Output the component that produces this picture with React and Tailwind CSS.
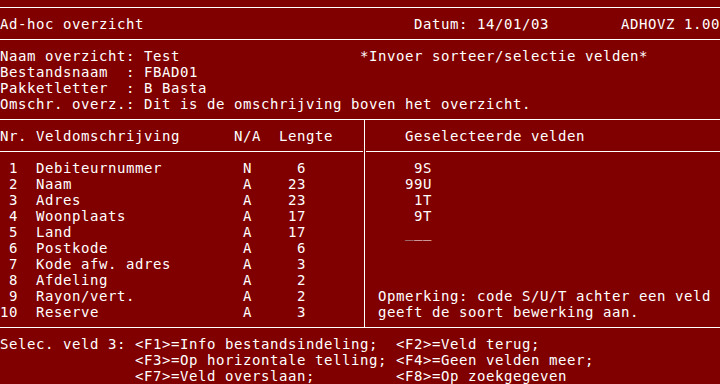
const fields = [
  ['1', 'Debiteurnummer', 'N', '6'],
  ['2', 'Naam', 'A', '23'],
  ['3', 'Adres', 'A', '23'],
  ['4', 'Woonplaats', 'A', '17'],
  ['5', 'Land', 'A', '17'],
  ['6', 'Postkode', 'A', '6'],
  ['7', 'Kode afw. adres', 'A', '3'],
  ['8', 'Afdeling', 'A', '2'],
  ['9', 'Rayon/vert.', 'A', '2'],
  ['10', 'Reserve', 'A', '3'],
]

const selected = ['9S', '99U', '1T', '9T']

const Line = ({ children }) => <div className="h-4 whitespace-pre">{children}</div>

export default function App() {
  return (
    <div className="w-[720px] h-[384px] overflow-hidden bg-[#800000] text-white font-['DejaVu_Sans_Mono',monospace] text-[14px] leading-4 tracking-[0.57px]">
      {/* title bar */}
      <div className="pt-[7px]">
        <div className="border-y border-white pt-2 pb-[7px]">
          <Line>{'Ad-hoc overzicht'.padEnd(46) + 'Datum: 14/01/03' + ' '.repeat(8) + 'ADHOVZ 1.00'}</Line>
        </div>
      </div>

      {/* info */}
      <div className="mt-2">
        <Line>{'Naam overzicht: Test'.padEnd(40) + '*Invoer sorteer/selectie velden*'}</Line>
        <Line>Bestandsnaam  : FBAD01</Line>
        <Line>Pakketletter  : B Basta</Line>
        <Line>Omschr. overz.: Dit is de omschrijving boven het overzicht.</Line>
      </div>

      {/* table */}
      <div className="mt-[7px] border-y border-white flex">
        <div className="w-[364px] pt-2 pb-[7px]">
          <Line>{'Nr. Veldomschrijving' + ' '.repeat(6) + 'N/A  Lengte'}</Line>
          <div className="h-4 pt-[7px] pr-px">
            <div className="h-px bg-white" />
          </div>
          {fields.map(([nr, name, na, len]) => (
            <Line key={nr}>{nr.padStart(2) + '  ' + name.padEnd(23) + na + len.padStart(6)}</Line>
          ))}
        </div>
        <div className="flex-1 border-l border-white pt-2 pb-[7px]">
          <div className="pl-[4px]">
            <Line>{'    Geselecteerde velden'}</Line>
          </div>
          <div className="h-4 pt-[7px] pl-px">
            <div className="h-px bg-white" />
          </div>
          <div className="pl-[4px]">
            {selected.map((s) => (
              <Line key={s}>{'    ' + s.padStart(3)}</Line>
            ))}
            <Line>
              {'    '}
              <span className="text-[#b0b0b0]">_</span>
              __
            </Line>
            <Line />
            <Line />
            <Line />
            <Line>{' Opmerking: code S/U/T achter een veld'}</Line>
            <Line>{' geeft de soort bewerking aan.'}</Line>
          </div>
        </div>
      </div>

      {/* footer */}
      <div className="mt-2">
        <Line>{'Selec. veld 3: <F1>=Info bestandsindeling;  <F2>=Veld terug;'}</Line>
        <Line>{'               <F3>=Op horizontale telling; <F4>=Geen velden meer;'}</Line>
        <Line>{'               <F7>=Veld overslaan;         <F8>=Op zoekgegeven'}</Line>
      </div>
    </div>
  )
}
